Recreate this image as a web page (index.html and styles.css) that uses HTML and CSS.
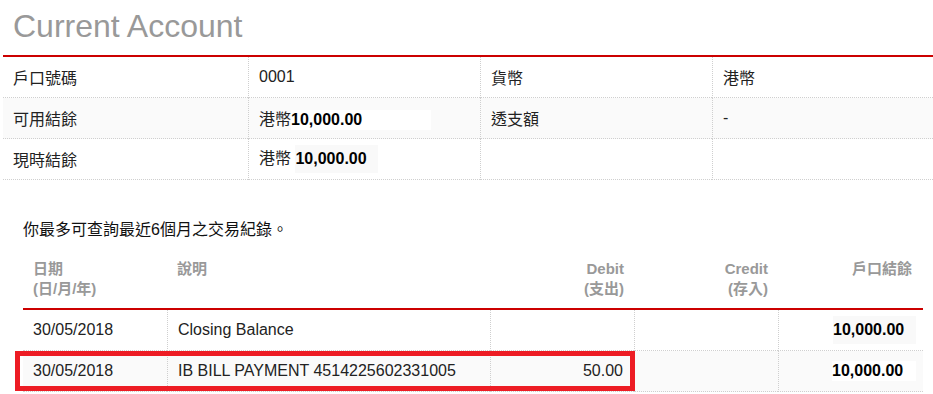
FILE: index.html
```html
<!DOCTYPE html>
<html lang="zh-Hant">
<head>
<meta charset="utf-8">
<title>Current Account</title>
<link rel="stylesheet" href="styles.css">
</head>
<body>
<main class="page">
  <section class="account">
    <h1 class="title">Current Account</h1>
    <div class="info">
      <div class="info-row">
        <div class="cell"><span>戶口號碼</span></div>
        <div class="cell"><span>0001</span></div>
        <div class="cell"><span>貨幣</span></div>
        <div class="cell"><span>港幣</span></div>
      </div>
      <div class="info-row alt">
        <div class="cell"><span>可用結餘</span></div>
        <div class="cell"><span>港幣<b class="amt amt-w amt-wide">10,000.00</b></span></div>
        <div class="cell"><span>透支額</span></div>
        <div class="cell"><span>-</span></div>
      </div>
      <div class="info-row">
        <div class="cell"><span>現時結餘</span></div>
        <div class="cell"><span>港幣 <b class="amt amt-g">10,000.00</b></span></div>
        <div class="cell"></div>
        <div class="cell"></div>
      </div>
    </div>
  </section>

  <section class="history">
    <p class="notice">你最多可查詢最近6個月之交易紀錄。</p>
    <div class="txn">
      <div class="txn-head">
        <div class="th">日期<br>(日/月/年)</div>
        <div class="th">說明</div>
        <div class="th num">Debit<br>(支出)</div>
        <div class="th num">Credit<br>(存入)</div>
        <div class="th num">戶口結餘</div>
      </div>
      <div class="txn-row">
        <div class="td"><span>30/05/2018</span></div>
        <div class="td"><span>Closing Balance</span></div>
        <div class="td num"></div>
        <div class="td num"></div>
        <div class="td num bal"><b class="amt amt-g">10,000.00</b></div>
      </div>
      <div class="txn-row alt">
        <div class="td"><span>30/05/2018</span></div>
        <div class="td"><span>IB BILL PAYMENT 4514225602331005</span></div>
        <div class="td num"><span>50.00</span></div>
        <div class="td num"></div>
        <div class="td num bal"><b class="amt amt-w">10,000.00</b></div>
      </div>
      <div class="mark" aria-hidden="true"></div>
    </div>
  </section>
</main>
</body>
</html>
```

FILE: styles.css
```css
* { box-sizing: border-box; }

html, body {
  margin: 0;
  padding: 0;
  background: #fff;
}

body {
  font-family: "Liberation Sans", Arial, "Noto Sans CJK TC", sans-serif;
  font-size: 16px;
  color: #222;
}

.page {
  width: 933px;
  overflow: hidden;
}

/* ---------- account summary ---------- */
.account {
  margin-left: 3px;
  width: 930px;
}

.title {
  margin: 0;
  padding: 8px 0 10px 10px;
  font-size: 32px;
  line-height: 37px;
  font-weight: normal;
  color: #999;
  border-bottom: 2px solid #cc0000;
}

.info-row {
  display: grid;
  grid-template-columns: 245px 232px 232px 221px;
}

.info-row.alt .cell { background: #fafafa; }

.cell {
  height: 41px;
  padding: 0 10px;
  display: flex;
  align-items: center;
  border-bottom: 1px dotted #cfcfcf;
  white-space: pre;
}

.cell + .cell { border-left: 1px dotted #cfcfcf; }

.amt {
  display: inline-block;
  font-weight: bold;
  color: #000;
  text-align: left;
  vertical-align: middle;
}

.amt-w {
  background: #fff;
  line-height: 20px;
}

.amt-g {
  background: #f9f9f9;
  line-height: 28px;
  width: 83px;
}

.amt-wide { width: 140px; }

.txn .amt-w { width: 84px; }

/* ---------- transaction history ---------- */
.history {
  margin: 40px 0 0 23px;
  width: 900px;
}

.notice {
  margin: 0 0 9px;
  line-height: 20px;
  font-size: 16px;
  color: #111;
}

.txn { position: relative; }

.txn-head,
.txn-row {
  display: grid;
  grid-template-columns: 144px 323px 144px 144px 145px;
}

.txn-head { border-bottom: 2px solid #cc0000; }

.th {
  padding: 10px 10px 9px;
  font-size: 15px;
  line-height: 20px;
  font-weight: bold;
  color: #999;
}

.th.num { text-align: right; }
.th:last-child { padding-right: 11px; }

.td {
  height: 41px;
  padding: 0 10px;
  display: flex;
  align-items: center;
  border-bottom: 1px dotted #cfcfcf;
}

.td + .td { border-left: 1px dotted #cfcfcf; }

.td.num { justify-content: flex-end; padding-right: 11px; }
.td.bal { padding-right: 7px; }

.txn-row.alt .td { background: #fafafa; }

.mark {
  position: absolute;
  left: -8px;
  top: 102px;
  width: 620px;
  height: 40px;
  border: 5px solid #ed1c24;
}
```
